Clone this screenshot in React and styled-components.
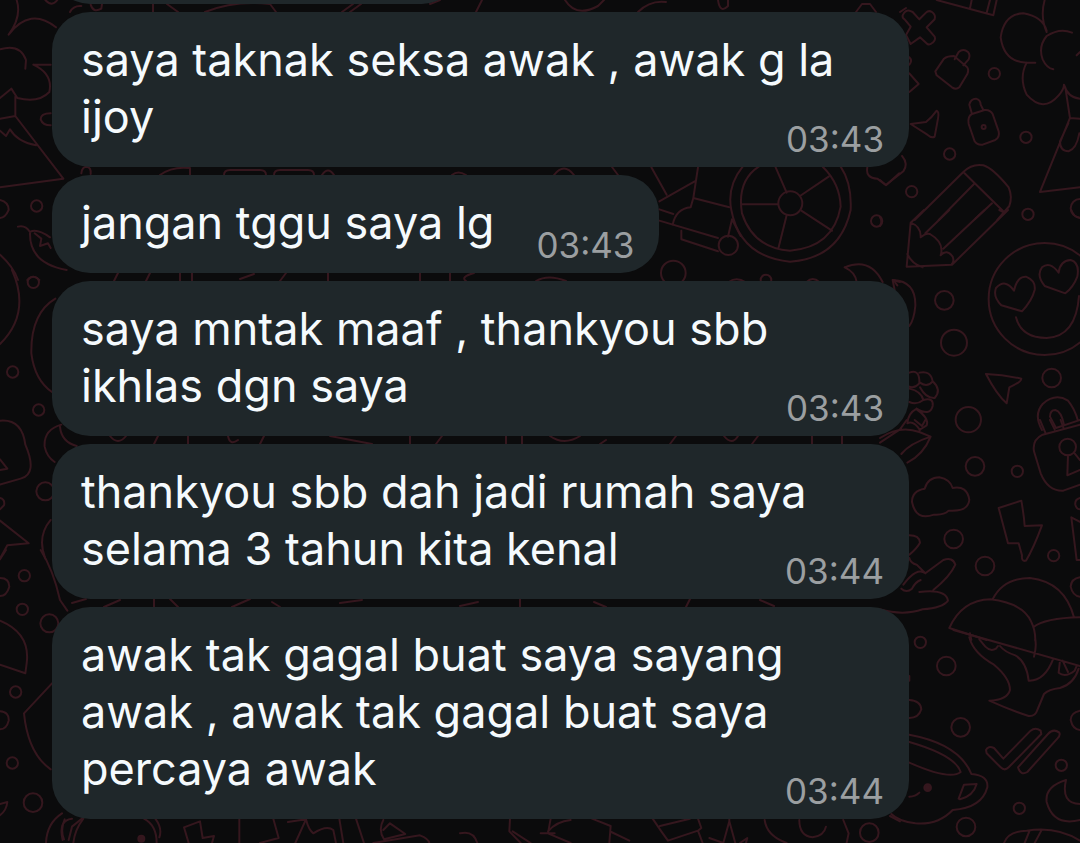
import styled, { createGlobalStyle } from "styled-components";

const GlobalStyle = createGlobalStyle`
  * {
    box-sizing: border-box;
  }
  body {
    margin: 0;
    background-color: #0b0b0c;
  }
`;

const Chat = styled.main`
  position: relative;
  min-height: 100vh;
  overflow: hidden;
  background-color: #0b0b0c;
  font-family: Inter, "Liberation Sans", sans-serif;
`;

const Wallpaper = styled.svg`
  position: absolute;
  top: 0;
  left: 0;
  width: 100%;
  height: 100%;
  fill: none;
  stroke: #35171e;
  stroke-width: 6;
  stroke-linecap: round;
  stroke-linejoin: round;
`;

const Slivers = styled.g`
  stroke-width: 2;
`;

const Messages = styled.ul`
  position: relative;
  display: flex;
  flex-direction: column;
  align-items: flex-start;
  gap: 8px;
  margin: 0;
  padding: 0 171px 24px 52px;
  list-style: none;
`;

const Bubble = styled.li`
  display: grid;
  padding: 19px 25px 22px 29px;
  border-radius: 38px;
  background-color: #1f272a;
`;

const PreviousBubble = styled(Bubble)`
  width: 408px;
  height: 98px;
  margin-top: -94px;
`;

const Text = styled.p`
  grid-area: 1 / 1;
  margin: 0;
  color: #f5fafd;
  font-size: 45px;
  line-height: 57px;
`;

/* keeps the last line clear of the time */
const TimeSpace = styled.span`
  display: inline-block;
  width: 140px;
`;

const Time = styled.time`
  grid-area: 1 / 1;
  align-self: end;
  justify-self: end;
  margin-bottom: -16px;
  color: #9b9fa1;
  font-size: 35px;
  line-height: 44px;
`;

const messages = [
  { text: "saya taknak seksa awak , awak g la ijoy", time: "03:43" },
  { text: "jangan tggu saya lg", time: "03:43" },
  { text: "saya mntak maaf , thankyou sbb ikhlas dgn saya", time: "03:43" },
  { text: "thankyou sbb dah jadi rumah saya selama 3 tahun kita kenal", time: "03:44" },
  { text: "awak tak gagal buat saya sayang awak , awak tak gagal buat saya percaya awak", time: "03:44" },
];

function Doodles() {
  return (
    <Wallpaper viewBox="0 0 1080 843" preserveAspectRatio="xMidYMin slice" aria-hidden="true">
      {/* cross, bottles, flower, pencil top */}
      <g transform="translate(880 0) scale(0.3333)">
        <path d="M170 0L340 46L350 0M275 0L270 25M330 0L320 38" />
        <path d="M88 32Q76 30 68 46Q66 54 74 58L92 80L78 105L92 132L120 112L142 132Q150 136 158 128Q168 120 164 110L140 82L164 58Q168 44 156 36Q146 30 138 38L118 58L98 36Z" />
        <path d="M166 214L192 176Q202 168 222 168L260 200Q268 208 262 222L238 262Q228 270 216 262L170 226ZM224 178L236 156Q250 144 264 156Q272 166 266 178L250 196" />
        <circle cx="343" cy="221" r="17" />
        <path d="M276 342Q262 350 266 372L284 424Q292 436 308 434L346 420Q360 412 356 394L338 342Q330 328 314 330ZM276 342L268 314Q272 296 288 296Q302 300 302 314L310 330" />
        <circle cx="311" cy="381" r="6" />
        <path d="M92 372L138 366Q156 352 170 332Q178 336 174 356L164 410Q156 416 142 404Z" />
        <circle cx="438" cy="412" r="17" />
        <circle cx="209" cy="462" r="17" />
        <circle cx="95" cy="575" r="17" />
        <circle cx="444" cy="643" r="17" />
        <circle cx="600" cy="625" r="28" />
        <path d="M88 172Q98 182 88 194M88 220L116 252L88 276M66 468Q86 492 70 514L18 555L0 540" />
        <path d="M500 92Q488 50 430 40Q372 42 362 112Q372 186 440 188L466 188M494 0Q480 50 500 96M576 98Q540 82 500 108Q474 140 488 178Q500 204 520 208M440 188Q416 234 440 284Q490 340 536 286Q552 268 552 254M552 254Q564 294 600 296M556 262L570 354L480 576L600 562M570 354L600 356M565 370L540 424Q540 454 566 454Q590 446 598 400M590 166L600 156" />
        <path d="M104 660L250 516Q276 490 310 496Q338 504 386 562Q398 590 388 618L352 660M250 516L372 636M176 660L282 552M286 656L336 610" />
      </g>
      {/* pencil tip, smiley, plane */}
      <g transform="translate(880 210) scale(0.3333)">
        <path d="M132 0L92 38L80 170L216 164L384 0M92 38Q124 50 122 82Q138 68 150 72Q194 98 182 136Q200 116 218 140Q224 156 214 164M136 70L208 0M190 116L314 0M82 132Q96 162 128 172M358 0L370 6" />
        <path d="M574 0Q580 20 600 24M0 22Q8 32 0 48" />
        <circle cx="494" cy="267" r="168" />
        <path d="M426 304L364 286Q338 260 348 234Q376 204 402 242Q412 198 438 200Q468 212 464 240Q456 272 426 304ZM556 250L494 228Q468 196 486 172Q510 152 536 188Q540 152 572 150Q600 158 592 200Q580 232 556 250ZM408 322Q424 384 500 384Q588 380 597 258" />
        <circle cx="193" cy="271" r="28" />
        <circle cx="222" cy="398" r="39" />
        <circle cx="515" cy="504" r="28" />
        <circle cx="265" cy="629" r="38" />
        <path d="M318 492Q370 494 424 506Q424 516 388 532L380 580Q350 554 318 492ZM40 210Q108 214 106 288Q102 330 88 348M40 210L52 226" />
        <path d="M486 660Q460 614 488 582Q526 548 564 572Q584 596 594 632L600 630M594 632L528 654L510 620Q510 600 526 600Q544 604 552 644" />
        <path d="M88 488Q120 476 118 520Q104 536 88 530M118 488Q152 480 158 514Q142 534 120 518M158 514Q186 540 164 564Q138 566 120 532M88 536Q124 544 130 570Q110 586 88 576M130 570Q162 562 158 588Q150 620 110 596M110 596Q84 610 82 640M110 598Q148 624 140 646L118 660M82 640Q100 630 120 660" />
      </g>
      {/* padlock, cloud, bolt, umbrella */}
      <g transform="translate(880 420) scale(0.3333)">
        <path d="M0 54Q60 14 118 36L152 50Q130 104 82 128M64 102Q90 70 152 50M0 68L60 28L80 0M104 0L126 18L136 0" />
        <circle cx="285" cy="139" r="28" />
        <circle cx="412" cy="154" r="17" />
        <circle cx="221" cy="357" r="28" />
        <circle cx="315" cy="438" r="28" />
        <circle cx="521" cy="407" r="17" />
        <path d="M600 14L488 44Q456 60 462 94L482 160Q504 214 550 212L600 194M480 0L496 38M510 0L524 28M542 0L550 22M564 106L562 166L600 150M582 98L600 120" />
        <circle cx="563" cy="81" r="25" />
        <path d="M134 206Q144 172 178 172Q210 178 218 204Q262 196 268 240Q264 276 206 272Q192 286 162 284Q108 304 96 246Q96 212 134 206ZM356 264L424 242Q432 286 434 318L486 316Q460 386 438 422Q424 426 426 406L416 370L384 370Z" />
        <path d="M600 234Q584 238 586 254Q590 268 600 268M600 306L574 292L590 420H600M600 472Q574 476 572 500Q578 528 600 530" />
        <path d="M88 346Q118 346 120 368Q110 386 88 404M88 414Q92 430 110 434L136 460L190 420Q218 410 226 434Q210 470 160 510M64 506Q80 520 96 506Q106 486 122 480M70 494Q110 440 136 460M118 516Q198 506 204 542Q188 564 128 568Q70 588 0 568" />
        <path d="M208 624Q246 540 332 538Q430 550 454 606Q466 630 466 660M338 538Q370 474 450 474Q554 486 582 592M460 622Q494 594 600 592M208 624L320 660M270 640L274 660" />
      </g>
      {/* umbrella handle, ticks, teapot, moon */}
      <g transform="translate(880 630) scale(0.3333)">
        <circle cx="121" cy="37" r="17" />
        <circle cx="199" cy="108" r="28" />
        <circle cx="242" cy="292" r="28" />
        <circle cx="544" cy="406" r="17" />
        <circle cx="418" cy="535" r="17" />
        <circle cx="258" cy="591" r="28" />
        <path d="M88 210Q122 212 124 238Q116 264 88 264M88 138V152M600 242Q572 248 572 270Q578 298 600 300" />
        <path d="M220 0L600 108M466 30Q470 50 462 80M268 22Q280 70 342 104Q390 144 390 180Q382 210 328 212Q390 240 446 258Q466 260 472 240L492 192Q506 178 540 174Q582 162 596 116M360 48Q374 66 406 76Q440 96 446 152Q494 154 520 86M298 28L316 50Q332 66 348 56L354 48M540 92L536 128Q556 144 584 122L590 108M548 92L564 126" />
        <path d="M318 360Q324 346 342 354L370 386L452 302Q466 290 482 302L484 312L386 412Q374 424 362 412L320 370ZM414 412L504 312Q520 294 538 308Q542 316 532 326L442 426Q422 438 414 412Z" />
        <path d="M88 314Q238 342 274 432Q326 436 322 472Q306 534 218 540Q174 586 106 580Q56 574 34 552M88 336Q226 376 242 426Q210 452 88 398M236 506L252 464L290 462Q280 498 240 508ZM88 500Q106 500 118 488" />
        <circle cx="143" cy="473" r="10" fill="#35171e" />
        <path d="M558 450Q494 470 500 516Q520 590 600 570M558 450Q542 520 600 522M372 639Q384 604 440 602Q530 588 600 632M434 639L448 604M464 639L484 602" />
      </g>
      {/* left margin */}
      <g transform="scale(0.3333)">
        <path d="M50 0Q66 50 26 104Q90 20 168 82M0 148Q60 130 78 180L76 206M100 194H152M100 194Q160 222 148 276Q116 310 52 294L34 266L0 294M46 290V348L190 536L0 562M46 348L0 356M0 392L18 408L30 388Q52 426 108 436M136 0Q156 22 172 0" />
        <path d="M152 340Q122 340 122 358Q128 376 152 376M244 520Q246 500 260 500Q274 502 272 522M210 36Q220 16 244 18M272 14Q280 40 304 26L306 12" />
        <path d="M0 600Q26 606 26 630Q16 654 0 654M54 680Q76 674 90 696Q110 684 150 712M90 700Q88 790 200 810M104 700L124 716L120 738L144 730L152 744M0 764Q40 800 54 840M82 840Q100 820 118 840" />
        <circle cx="110" cy="618" r="17" />
      </g>
      <g transform="translate(0 270) scale(0.3333)">
        <circle cx="100" cy="37" r="17" />
        <circle cx="38" cy="306" r="17" />
        <circle cx="116" cy="420" r="17" />
        <circle cx="136" cy="664" r="27" />
        <path d="M36 0Q94 130 0 222M166 86Q92 130 94 250Q104 330 156 366M0 452Q66 446 76 524Q114 612 62 626L0 644M0 600L22 596L0 568M0 684Q16 688 12 706L0 718M0 752L86 820L22 826L0 866M184 464Q130 480 134 530Q140 560 164 576M180 470Q184 516 230 528M152 750Q110 800 136 866" />
      </g>
      <g transform="translate(0 550) scale(0.3333)">
        <circle cx="73" cy="77" r="17" />
        <circle cx="67" cy="178" r="17" />
        <circle cx="148" cy="220" r="27" />
        <circle cx="47" cy="426" r="17" />
        <circle cx="37" cy="639" r="17" />
        <circle cx="99" cy="758" r="28" />
        <path d="M0 84Q28 84 28 110Q20 138 0 138M0 28L18 0M122 0Q160 60 180 150L202 182M0 212Q92 250 80 340L76 370L0 344M156 400L72 490Q84 610 152 658M0 484Q28 486 26 512Q20 538 0 538M0 762L22 756Q20 780 0 796M138 879Q140 820 186 790M188 870Q174 810 216 806M206 870L216 830L248 804" />
      </g>
      {/* cart and wheel */}
      <g transform="translate(640 150) scale(0.3333)">
        <circle cx="451" cy="160" r="36" />
        <path d="M308 50Q260 110 274 180Q300 320 450 335Q600 325 632 180Q636 100 602 50M356 50Q290 94 306 190Q340 294 450 302Q580 292 602 170Q600 100 548 50M406 50L440 128M480 138L566 80M484 182L576 242M440 196L416 292M414 163H308" />
        <path d="M34 52L80 134M58 154L164 94M174 52L160 144L268 172M160 144L152 172Q108 176 98 224M58 178L100 192M58 212L234 264M124 242V268L234 304M276 208L264 260M302 258L276 208" />
        <circle cx="265" cy="286" r="29" />
        <circle cx="100" cy="369" r="37" />
        <circle cx="378" cy="390" r="16" />
        <circle cx="710" cy="213" r="17" />
        <path d="M266 396Q290 380 316 396M500 396Q518 378 538 396M614 352Q690 320 728 396M614 352Q646 366 650 396M682 52Q676 84 712 86L738 106L778 70M764 420L758 390L780 396" />
      </g>
      {/* slivers between the bubbles */}
      <Slivers>
        <path d="M153 4V12M167 4L178 12M205 12Q235 0 270 4L276 12M342 12L353 4M350 12L361 4M440 0L430 4M476 12L482 0M565 0Q576 18 598 6L604 0M638 12Q650 0 666 2M718 0Q720 14 728 6V0M856 12L862 4H870L876 12M900 12L906 8" />
        <path d="M160 175Q172 166 190 168V175M224 175Q224 170 230 170H260Q266 170 266 175M274 175Q274 170 280 170H308Q314 170 314 175M322 175Q328 166 334 175M452 175Q458 170 466 175M554 175Q564 162 574 175M612 167L618 175" />
        <path d="M118 273L114 281M150 273L146 281M180 273V281M192 273V281M240 279L254 274M286 273L280 281M328 273V281M420 273V281M450 273V281M474 273Q460 277 466 281M536 281Q548 274 566 281" />
        <path d="M110 436Q118 446 126 436M158 436L154 444M188 436V444M228 436Q230 446 238 440M264 436L260 444M330 436L372 444M410 436V444M436 444L442 436M506 436V444M522 436V444M550 436Q564 446 580 436M600 444L606 440M670 444L676 436M724 436Q732 446 738 436M752 444L758 436M812 436V444M842 436V444" />
        <path d="M72 603L86 599M104 607L120 600M154 599V607M170 599L178 607M232 607L250 599M272 602L280 607M340 603L362 600M460 606L478 602M520 599V607M594 602L606 607M690 599L686 607M760 600L774 606" />
      </Slivers>
      {/* bottom edge */}
      <g transform="translate(60 800) scale(0.3333)">
        <path d="M252 56Q290 76 290 129M286 56Q308 86 298 112M70 56Q44 90 40 129M14 58Q0 90 12 118M386 129L372 82L420 64L428 114L462 108L456 129M538 56V129M640 56L656 114L600 129M684 66L738 58L706 129M738 58Q746 90 760 100Q800 74 820 90L828 129M838 56L850 129M888 56L912 129M970 60Q954 90 972 118L1036 102L990 70L970 90M940 129L1080 106Q1106 116 1108 129" />
        <circle cx="244" cy="116" r="9" fill="#35171e" />
      </g>
      <g transform="translate(460 800) scale(0.3333)">
        <path d="M0 100Q40 90 52 129M150 56L148 94L182 129M158 94L212 129M272 56L264 100L332 129M242 100H284M264 94Q290 64 332 60M396 56L452 78L448 129M454 96L508 122M578 56L604 94L624 122L714 92L728 129M600 78L690 56M714 56L724 84L714 92M748 114L790 129L808 64L826 129M808 64V56M840 129L862 114L858 129M914 60Q920 108 980 129M1018 60Q1018 108 1058 112Q1092 108 1098 80M1150 60L1166 100L1160 129M1290 48L1320 64" />
        <circle cx="1228" cy="98" r="28" />
      </g>
    </Wallpaper>
  );
}

export default function App() {
  return (
    <Chat>
      <GlobalStyle />
      <Doodles />
      <Messages>
        <PreviousBubble />
        {messages.map((message) => (
          <Bubble key={message.text}>
            <Text>
              {message.text}
              <TimeSpace />
            </Text>
            <Time>{message.time}</Time>
          </Bubble>
        ))}
      </Messages>
    </Chat>
  );
}
